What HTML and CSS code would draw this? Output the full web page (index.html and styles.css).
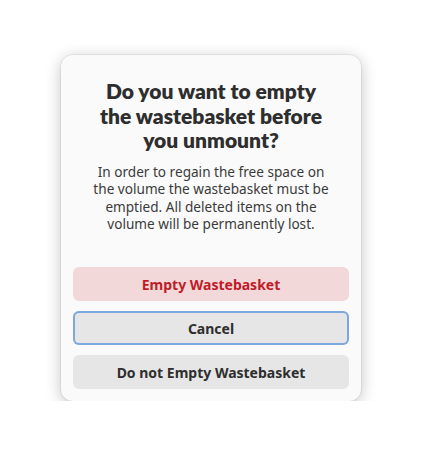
FILE: index.html
```html
<!DOCTYPE html>
<html>
<head>
<meta charset="utf-8">
<link rel="stylesheet" href="styles.css">
</head>
<body>
<div class="dialog">
  <h1 class="title">Do you want to empty<br>the wastebasket before<br>you unmount?</h1>
  <p class="body-text">In order to regain the free space on<br>the volume the wastebasket must be<br>emptied. All deleted items on the<br>volume will be permanently lost.</p>
  <div class="actions">
    <button class="btn btn-destructive">Empty Wastebasket</button>
    <button class="btn btn-focus">Cancel</button>
    <button class="btn">Do not Empty Wastebasket</button>
  </div>
</div>
</body>
</html>
```
FILE: styles.css
```css
html, body {
  margin: 0;
  padding: 0;
  background: #ffffff;
}
body {
  padding: 55px 61px 0 61px;
  font-family: "Noto Sans", sans-serif;
  color: #2e2e2e;
}
.dialog {
  width: 300px;
  height: 346px;
  box-sizing: border-box;
  background: #fafafa;
  border-radius: 12px;
  box-shadow: 0 0 0 1px rgba(0,0,0,0.05), 0 3px 16px rgba(0,0,0,0.24);
  padding: 24px 12px 12px 12px;
  display: flex;
  flex-direction: column;
}
.title {
  margin: 0;
  font-family: "Lato", sans-serif;
  font-size: 21px;
  line-height: 24.5px;
  font-weight: 800;
  text-align: center;
  color: #2e2e2e;
}
.body-text {
  margin: 10px 0 0 0;
  font-size: 13.6px;
  line-height: 17.5px;
  text-align: center;
  color: #3a3a3a;
}
.actions {
  margin-top: auto;
  display: flex;
  flex-direction: column;
  gap: 10px;
}
.btn {
  height: 34px;
  border: none;
  border-radius: 6px;
  background: #e6e6e6;
  color: #2e2e2e;
  font-family: "Noto Sans", sans-serif;
  font-size: 14px;
  font-weight: 700;
  padding: 0;
}
.btn-destructive {
  background: #f2d8d9;
  color: #c01c28;
}
.btn-focus {
  box-shadow: inset 0 0 0 2px #7ca7e0;
}
```
